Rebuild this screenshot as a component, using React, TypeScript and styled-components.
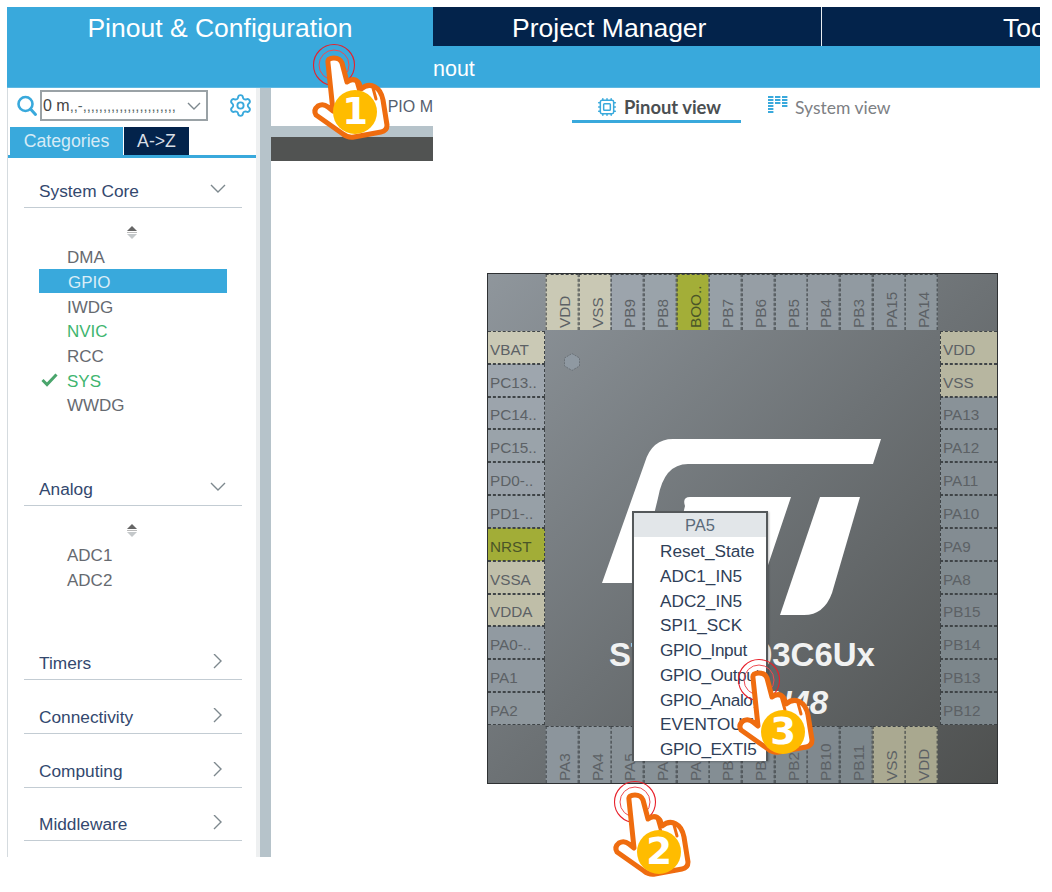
import React from "react";
import styled, { createGlobalStyle } from "styled-components";
import { Settings, Cpu } from "lucide-react";

const BLUE = "#39a9dc";
const NAVY = "#03234b";
const SANS = `"Liberation Sans", Arial, sans-serif`;

const Global = createGlobalStyle`
  html, body { margin: 0; padding: 0; background: #fff; }
  body { font-family: ${SANS}; overflow: hidden; }
  * { box-sizing: border-box; }
`;

const Stage = styled.div`
  position: relative;
  width: 1052px;
  height: 892px;
  padding: 7px 12px 0 7px;
  overflow: hidden;
`;
const Frame = styled.div`
  width: 1033px;
  height: 850px;
  display: flex;
  flex-direction: column;
  overflow: hidden;
`;
const TabBar = styled.div`
  display: flex;
  flex: none;
  height: 39px;
  background: ${NAVY};
`;
const TopTab = styled.div<{ $active?: boolean; $w: number; $pad?: number }>`
  flex: none;
  width: ${(p) => p.$w}px;
  padding-left: ${(p) => p.$pad ?? 0}px;
  padding-top: 3px;
  display: flex;
  align-items: center;
  justify-content: ${(p) => (p.$pad ? "flex-start" : "center")};
  background: ${(p) => (p.$active ? BLUE : NAVY)};
  color: #fff;
  font-size: 26.5px;
  white-space: nowrap;
`;
const TabDivider = styled.div`
  flex: none;
  width: 1px;
  background: #e8eef2;
`;
const SubBar = styled.div`
  flex: none;
  height: 42px;
  background: ${BLUE};
  color: #fff;
  font-size: 21.5px;
  padding: 11px 0 0 426px;
  border-bottom: 1px solid #5fb8e2;
`;
const Body = styled.div`
  flex: 1;
  display: flex;
  min-height: 0;
`;
const Sidebar = styled.aside`
  flex: none;
  width: 249px;
  display: flex;
  flex-direction: column;
  border-left: 1px solid #d5dbdf;
`;
const SearchRow = styled.div`
  height: 39px;
  flex: none;
  display: flex;
  align-items: flex-start;
  padding: 2px 0 0 8px;
`;
const SearchIcon = styled.svg`
  flex: none;
  width: 22px;
  height: 22px;
  margin-top: 5px;
`;
const Combo = styled.div`
  flex: none;
  width: 168px;
  height: 31px;
  margin-left: 2px;
  border: 2px solid #9aa2a6;
  display: flex;
  align-items: center;
  justify-content: space-between;
  padding: 0 5px 0 1px;
  color: #444;
  font-size: 16px;
  white-space: nowrap;
  overflow: hidden;
`;
const ComboFill = styled.span`
  font-size: 14.6px;
  color: #566;
`;
const GearWrap = styled.div`
  flex: none;
  margin: 3px 0 0 20px;
  color: ${BLUE};
  display: flex;
`;
const ModeTabs = styled.div`
  flex: none;
  height: 31px;
  display: flex;
  gap: 1px;
  padding-left: 2px;
  border-bottom: 3px solid ${BLUE};
`;
const ModeTab = styled.div<{ $active?: boolean; $w: number }>`
  width: ${(p) => p.$w}px;
  display: flex;
  align-items: center;
  justify-content: center;
  font-size: 17.7px;
  background: ${(p) => (p.$active ? BLUE : NAVY)};
  color: ${(p) => (p.$active ? "#d6ebf6" : "#d8dfe6")};
`;
const Cats = styled.div`
  flex: 1;
  padding-top: 18px;
  min-height: 0;
`;
const Section = styled.section<{ $top?: number; $after?: number }>`
  flex: none;
  margin: ${(p) => p.$top ?? 0}px 0 ${(p) => p.$after ?? 0}px 0;
  padding: 0 14px 0 16px;
`;
const SectionList = styled.div`
  display: flex;
  flex-direction: column;
`;
const SectionHead = styled.div`
  height: 32px;
  display: flex;
  justify-content: space-between;
  align-items: flex-start;
  padding: 5px 16px 0 15px;
  border-bottom: 1.5px solid #c3ccd3;
  color: #33486e;
  font-size: 17.3px;
`;
const Chevron = styled.svg`
  flex: none;
  width: 16px;
  height: 16px;
  margin-top: 1px;
  fill: none;
  stroke: #7d888e;
  stroke-width: 1.4;
`;
const SortMark = styled.svg`
  display: block;
  width: 12px;
  height: 16px;
  margin: 16px 0 4px 102px;
`;
const Item = styled.div<{ $sel?: boolean; $green?: boolean }>`
  position: relative;
  height: 24.7px;
  width: 188px;
  margin-left: 15px;
  padding-left: ${(p) => (p.$sel ? 29 : 28)}px;
  padding-top: 4px;
  display: flex;
  align-items: center;
  font-size: 17px;
  color: ${(p) => (p.$sel ? "#d9edf7" : p.$green ? "#3fb56f" : "#666a70")};
  background: ${(p) => (p.$sel ? BLUE : "transparent")};
`;
const CheckMark = styled.svg`
  position: absolute;
  left: 2px;
  top: 6px;
  width: 17px;
  height: 14px;
  fill: none;
  stroke: #4aa56c;
  stroke-width: 3;
`;
const Gutter = styled.div`
  flex: none;
  width: 15px;
  border-left: 4px solid #eef0f1;
  background: #b6c3ca;
`;
const Main = styled.main`
  flex: 1;
  display: flex;
  min-width: 0;
`;
const Stub = styled.div`
  flex: none;
  width: 162px;
`;
const StubTitle = styled.div`
  height: 38px;
  padding: 10px 0 0 0;
  text-align: right;
  color: #55606e;
  font-size: 16px;
`;
const StubRule = styled.div`
  height: 11px;
  background: #b6c3ca;
`;
const StubDark = styled.div`
  height: 24px;
  background: #515352;
`;
const Canvas = styled.div`
  flex: 1;
  min-width: 0;
`;
const ViewTabs = styled.div`
  display: flex;
  margin-left: 139px;
  height: 185px;
  align-items: flex-start;
`;
const ViewTab = styled.div<{ $active?: boolean }>`
  display: flex;
  align-items: center;
  height: 35px;
  ${(p) => (p.$active ? "width:169px;" : "margin-left:27px;")}
  padding: 6px 0 0 ${(p) => (p.$active ? 25 : 0)}px;
  border-bottom: 3px solid ${(p) => (p.$active ? BLUE : "transparent")};
  font-family: Lato, sans-serif;
  font-size: ${(p) => (p.$active ? 18.4 : 17.5)}px;
  font-weight: ${(p) => (p.$active ? 700 : 400)};
  color: ${(p) => (p.$active ? "#4b4f52" : "#7d8084")};
  gap: 7px;
`;
const BarsIcon = styled.svg`
  width: 20px;
  height: 18px;
  margin-top: -4px;
`;
const CpuWrap = styled.span`
  display: flex;
  margin-top: -1px;
  color: ${BLUE};
`;
const Chip = styled.div`
  position: relative;
  margin-left: 54px;
  width: 511px;
  height: 511px;
  border: 1px solid #2e3133;
  background: linear-gradient(135deg, #8f969c 0%, #6d7275 50%, #4e504f 100%);
  display: grid;
  grid-template-columns: 58px 392px 59px;
  grid-template-rows: 57px 394px 58px;
`;
const PinRow = styled.div<{ $col: number; $row: number; $dir: "row" | "column" }>`
  grid-column: ${(p) => p.$col};
  grid-row: ${(p) => p.$row};
  display: flex;
  flex-direction: ${(p) => p.$dir};
  ${(p) => (p.$col === 3 ? "padding-left:2px;" : "")}
  ${(p) => (p.$col === 1 ? "padding-right:1px;" : "")}
  ${(p) => (p.$row === 1 ? "padding-bottom:1px;" : "")}
  ${(p) => (p.$row === 3 ? "padding-top:1px;" : "")}
`;
const Pin = styled.div<{ $side: "t" | "b" | "l" | "r"; $kind?: "p" | "g" }>`
  flex: 1 1 0;
  min-width: 0;
  min-height: 0;
  border: 1px dashed #3f4447;
  ${(p) => (p.$side === "t" ? "border-top:0;" : "")}
  ${(p) => (p.$side === "b" ? "border-top:0;" : "")}
  ${(p) => (p.$side === "l" ? "border-left:0;" : "")}
  ${(p) => (p.$side === "r" ? "border-right:0;" : "")}
  color: ${(p) => (p.$kind === "g" ? "#4a5528" : "#5c6165")};
  font-size: 15.3px;
  white-space: nowrap;
  overflow: hidden;
  display: flex;
  align-items: ${(p) => (p.$side === "t" || p.$side === "b" ? "center" : "flex-end")};
  ${(p) =>
    p.$side === "t" || p.$side === "b"
      ? "writing-mode: vertical-rl; transform: rotate(180deg); justify-content: flex-start; padding-top: 2px; padding-right: 5px;"
      : "padding: 0 0 4px 2px;"}
`;
const Die = styled.div`
  grid-column: 2;
  grid-row: 2;
  position: relative;
  display: flex;
  flex-direction: column;
  align-items: center;
  justify-content: flex-end;
  padding-bottom: 3px;
  color: #f1f2f2;
  font-weight: 700;
  font-size: 33px;
`;
const Logo = styled.svg`
  position: absolute;
  left: 0;
  top: 0;
  width: 392px;
  height: 394px;
`;
const PartName = styled.div`
  position: relative;
  line-height: 38px;
`;
const Package = styled.div`
  position: relative;
  font-style: italic;
  line-height: 38px;
  margin-top: 10px;
`;
const Popup = styled.div`
  position: absolute;
  left: 144px;
  top: 237px;
  width: 136px;
  height: 250px;
  background: #fff;
  border: 2px solid #54585a;
  border-bottom: 0;
  color: #2f4058;
  box-shadow: 1px 1px 2px rgba(0, 0, 0, 0.25);
`;
const PopupHead = styled.div`
  height: 24px;
  margin-bottom: 2px;
  background: #e2e6e9;
  color: #5a6a7a;
  text-align: center;
  font-size: 16.5px;
  line-height: 25px;
`;
const PopupRow = styled.div<{ $tight?: boolean }>`
  height: 24.75px;
  padding-left: 26px;
  font-size: 17.2px;
  letter-spacing: ${(p) => (p.$tight ? "-0.4px" : "0")};
  line-height: 25px;
  white-space: nowrap;
  overflow: hidden;
`;
const Mark = styled.div<{ $x: number; $y: number }>`
  position: absolute;
  left: ${(p) => p.$x - 25}px;
  top: ${(p) => p.$y - 25}px;
  width: 85px;
  height: 105px;
`;
const MarkArt = styled.svg`
  display: block;
  overflow: visible;
`;
const Badge = styled.div<{ $dx: number; $dy: number }>`
  position: absolute;
  left: ${(p) => 24 + p.$dx}px;
  top: ${(p) => 50 + p.$dy}px;
  width: 44px;
  height: 44px;
  border-radius: 50%;
  background: #ffbc00;
  color: #fff;
  font-family: "DejaVu Sans", sans-serif;
  font-weight: 700;
  font-size: 37px;
  line-height: 44px;
  text-align: center;
`;

const HAND =
  "M-6 -2 Q-7 -7 0 -7 Q6 -7 8 -2 L13 17 Q20 12 25 18 L27 24 Q34 18 41 22 Q47 25 49 35 L53 60 Q53 66 47 67 L20 72 Q14 73 9 69 L-18 50 Q-21 45 -16 41 Q-11 38 -6 42 L-1 46 Z";

function HandMark({ x, y, n, dx = 0, dy = 0 }: { x: number; y: number; n: number; dx?: number; dy?: number }) {
  return (
    <Mark $x={x} $y={y}>
      <MarkArt width="85" height="105" viewBox="-25 -25 85 105">
        <circle r="20.5" fill="none" stroke="#e8202a" strokeWidth="1.1" />
        <circle r="15" fill="none" stroke="#ee4a50" strokeWidth="1" />
        <path d={HAND} fill="#fff" stroke="#ef6c0f" strokeWidth="5" strokeLinejoin="round" />
        <path d="M22 16 L26 30 M39 23 L42 34" fill="none" stroke="#ef6c0f" strokeWidth="3" strokeLinecap="round" />
      </MarkArt>
      <Badge $dx={dx} $dy={dy}>{n}</Badge>
    </Mark>
  );
}

type PinSpec = [string, ("p" | "g")?];
const TOP: PinSpec[] = [["VDD", "p"], ["VSS", "p"], ["PB9"], ["PB8"], ["BOO..", "g"], ["PB7"], ["PB6"], ["PB5"], ["PB4"], ["PB3"], ["PA15"], ["PA14"]];
const LEFT: PinSpec[] = [["VBAT", "p"], ["PC13.."], ["PC14.."], ["PC15.."], ["PD0-.."], ["PD1-.."], ["NRST", "g"], ["VSSA", "p"], ["VDDA", "p"], ["PA0-.."], ["PA1"], ["PA2"]];
const RIGHT: PinSpec[] = [["VDD", "p"], ["VSS", "p"], ["PA13"], ["PA12"], ["PA11"], ["PA10"], ["PA9"], ["PA8"], ["PB15"], ["PB14"], ["PB13"], ["PB12"]];
const BOTTOM: PinSpec[] = [["PA3"], ["PA4"], ["PA5"], ["PA6"], ["PA7"], ["PB0"], ["PB1"], ["PB2"], ["PB10"], ["PB11"], ["VSS", "p"], ["VDD", "p"]];

const RAMP: Record<string, [number[], number[]]> = {
  n: [[160, 168, 176], [122, 132, 137]],
  p: [[203, 202, 182], [168, 167, 142]],
  g: [[166, 177, 58], [150, 163, 48]],
};
// A pin's fill follows the chip's diagonal sheen, so it is worked out from its place on the chip.
function pinFill(kind: string | undefined, side: string, i: number) {
  const along = (i + 0.5) / 12;
  const pos: Record<string, number> = {
    t: along * 0.5,
    l: along * 0.5,
    r: 0.5 + along * 0.5,
    b: 0.5 + along * 0.5,
  };
  const t = pos[side];
  const [a, b] = RAMP[kind ?? "n"];
  return `rgb(${a.map((v, k) => Math.round(v + (b[k] - v) * t)).join(",")})`;
}

const Pins = ({ list, side }: { list: PinSpec[]; side: "t" | "b" | "l" | "r" }) => (
  <>
    {list.map(([name, kind], i) => (
      <Pin key={i} $side={side} $kind={kind} style={{ background: pinFill(kind, side, i) }}>
        {name}
      </Pin>
    ))}
  </>
);

const Down = () => (
  <Chevron viewBox="0 0 16 16">
    <path d="M1 3 L8 10 L15 3" />
  </Chevron>
);
const RightChev = () => (
  <Chevron viewBox="0 0 16 16">
    <path d="M4 0 L11 7 L4 14" />
  </Chevron>
);
const Sort = () => (
  <SortMark viewBox="0 0 12 16">
    <path d="M6 2 L11 7 H1 Z" fill="#666" />
    <rect x="1" y="8" width="10" height="1" fill="#bbb" />
    <path d="M1 10 H11 L6 15 Z" fill="#c4c8ca" />
  </SortMark>
);

const Bars = () => (
  <BarsIcon viewBox="0 0 20 18">
    {[0, 7, 14].map((x, c) =>
      [0, 3, 6, 9, 12, 15].slice(0, c === 0 ? 6 : c === 1 ? 3 : 4).map((y) => (
        <rect key={`${x}-${y}`} x={x} y={y} width="5.4" height="2" fill={BLUE} />
      ))
    )}
  </BarsIcon>
);

export default function App() {
  return (
    <Stage>
      <Global />
      <Frame>
        <TabBar>
          <TopTab $active $w={426}>Pinout &amp; Configuration</TopTab>
          <TopTab $w={388} $pad={79}>Project Manager</TopTab>
          <TabDivider />
          <TopTab $w={426} $pad={181}>Tools</TopTab>
        </TabBar>
        <SubBar>nout</SubBar>
        <Body>
          <Sidebar>
            <SearchRow>
              <SearchIcon viewBox="0 0 22 22">
                <circle cx="9.5" cy="9" r="7" fill="none" stroke={BLUE} strokeWidth="2.6" />
                <path d="M14.5 14 L19.5 19.5" stroke={BLUE} strokeWidth="3" strokeLinecap="round" />
              </SearchIcon>
              <Combo>
                <span>
                  0 m<ComboFill>,,-,,,,,,,,,,,,,,,,,,,,,,,</ComboFill>
                </span>
                <svg width="14" height="8" viewBox="0 0 14 8" fill="none" stroke="#7d888e" strokeWidth="1.4">
                  <path d="M1 1 L7 7 L13 1" />
                </svg>
              </Combo>
              <GearWrap>
                <Settings size={25} strokeWidth={1.8} />
              </GearWrap>
            </SearchRow>
            <ModeTabs>
              <ModeTab $active $w={113}>Categories</ModeTab>
              <ModeTab $w={65}>A-&gt;Z</ModeTab>
            </ModeTabs>
            <Cats>
              <Section>
                <SectionHead>System Core<Down /></SectionHead>
                <SectionList>
                  <Sort />
                  <Item>DMA</Item>
                  <Item $sel>GPIO</Item>
                  <Item>IWDG</Item>
                  <Item $green>NVIC</Item>
                  <Item>RCC</Item>
                  <Item $green>
                    <CheckMark viewBox="0 0 17 14"><path d="M1.5 7 L6 11.5 L15.5 1.5" /></CheckMark>
                    SYS
                  </Item>
                  <Item>WWDG</Item>
                </SectionList>
              </Section>
              <Section $top={57}>
                <SectionHead>Analog<Down /></SectionHead>
                <SectionList>
                  <Sort />
                  <Item>ADC1</Item>
                  <Item>ADC2</Item>
                </SectionList>
              </Section>
              <Section $top={57} $after={22}>
                <SectionHead>Timers<RightChev /></SectionHead>
              </Section>
              <Section $after={22}>
                <SectionHead>Connectivity<RightChev /></SectionHead>
              </Section>
              <Section $after={21}>
                <SectionHead>Computing<RightChev /></SectionHead>
              </Section>
              <Section>
                <SectionHead>Middleware<RightChev /></SectionHead>
              </Section>
            </Cats>
          </Sidebar>
          <Gutter />
          <Main>
            <Stub>
              <StubTitle>PIO M</StubTitle>
              <StubRule />
              <StubDark />
            </Stub>
            <Canvas>
              <ViewTabs>
                <ViewTab $active>
                  <CpuWrap><Cpu size={20} strokeWidth={1.8} /></CpuWrap>
                  Pinout view
                </ViewTab>
                <ViewTab>
                  <Bars />
                  System view
                </ViewTab>
              </ViewTabs>
              <Chip>
                <PinRow $col={2} $row={1} $dir="row"><Pins list={TOP} side="t" /></PinRow>
                <PinRow $col={1} $row={2} $dir="column"><Pins list={LEFT} side="l" /></PinRow>
                <PinRow $col={3} $row={2} $dir="column"><Pins list={RIGHT} side="r" /></PinRow>
                <PinRow $col={2} $row={3} $dir="row"><Pins list={BOTTOM} side="b" /></PinRow>
                <Die>
                  <Logo viewBox="0 0 392 394">
                    <polygon points="26,22.5 33.5,27 33.5,35 26,39.5 18.5,35 18.5,27" fill="#8f99a2" stroke="#6b7278" strokeDasharray="2 1" />
                    <path d="M127 108 H335 L327 133 H142 Q118 133 112 167 L104 200 L90 252 H56 L99 131 Q106 108 127 108 Z" fill="#fff" />
                    <path d="M144 166 H245 L216 252 H120 L139 175 Q136 166 144 166 Z" fill="#fff" />
                    <path d="M274 166 H314 L286 262 Q278 284 258 284 H234 Z" fill="#fff" />
                  </Logo>
                  <PartName>STM32F103C6Ux</PartName>
                  <Package>UFQFPN48</Package>
                </Die>
                <Popup>
                  <PopupHead>PA5</PopupHead>
                  {["Reset_State", "ADC1_IN5", "ADC2_IN5", "SPI1_SCK", "GPIO_Input", "GPIO_Output", "GPIO_Analog", "EVENTOUT", "GPIO_EXTI5"].map((t) => (
                    <PopupRow key={t} $tight={t.startsWith("GPIO")}>{t}</PopupRow>
                  ))}
                </Popup>
              </Chip>
            </Canvas>
          </Main>
        </Body>
      </Frame>
      <HandMark x={334} y={65} n={1} />
      <HandMark x={635} y={802} n={2} dx={3} dy={3} />
      <HandMark x={759} y={680} n={3} dx={3} dy={5} />
    </Stage>
  );
}
